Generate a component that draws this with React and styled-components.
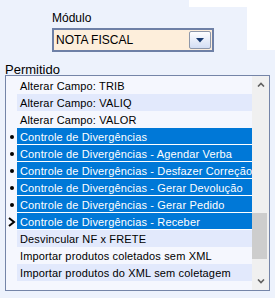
import React from "react";
import styled, { createGlobalStyle } from "styled-components";

const GlobalStyle = createGlobalStyle`
  body {
    margin: 0;
    background: #ffffff;
    font-family: "Liberation Sans", Arial, sans-serif;
  }
`;

const items = [
  { label: "Alterar Campo: TRIB" },
  { label: "Alterar Campo: VALIQ" },
  { label: "Alterar Campo: VALOR" },
  { label: "Controle de Divergências", selected: true, mark: "dot" },
  { label: "Controle de Divergências - Agendar Verba", selected: true, mark: "dot" },
  { label: "Controle de Divergências - Desfazer Correção", selected: true, mark: "dot" },
  { label: "Controle de Divergências - Gerar Devolução", selected: true, mark: "dot" },
  { label: "Controle de Divergências - Gerar Pedido", selected: true, mark: "dot" },
  { label: "Controle de Divergências - Receber", selected: true, mark: "arrow" },
  { label: "Desvincular NF x FRETE" },
  { label: "Importar produtos coletados sem XML" },
  { label: "Importar produtos do XML sem coletagem" },
];

const Page = styled.div`
  width: 275px;
  height: 298px;
  overflow: hidden;
  background: #edf2fc;
`;

//header with the white notch on the right
const Header = styled.div`
  display: grid;
  grid-template-columns: 189px 58px 28px;
  grid-template-rows: 7px 45px;
  background: #edf2fc;
`;

const Fill = styled.div`
  background: ${(p) => (p.$white ? "#ffffff" : "#edf2fc")};
  grid-column: ${(p) => p.$col};
  height: ${(p) => (p.$h ? p.$h + "px" : "auto")};
`;

const ModuleField = styled.div`
  grid-column: 1 / 3;
  padding: 4px 0 0 52px;
`;

const FieldLabel = styled.div`
  font-size: ${(p) => p.$size}px;
  line-height: ${(p) => p.$lh}px;
  color: #000;
`;

const Select = styled.div`
  margin-top: 3px;
  width: 162px;
  height: 24px;
  box-sizing: border-box;
  border: 2px solid #6e80a6;
  background: #fdeedb;
  display: flex;
  align-items: center;
  justify-content: space-between;
  padding: 0 1px 0 2px;
`;

const SelectText = styled.span`
  font-size: 12px;
  color: #000;
`;

const DropButton = styled.div`
  width: 22px;
  height: 18px;
  box-sizing: border-box;
  border: 1px solid #8d97aa;
  border-radius: 2px;
  background: linear-gradient(#fefeff, #d3def4);
  display: flex;
  align-items: center;
  justify-content: center;
`;

const Section = styled.div`
  padding: 12px 0 0 5px;
`;

const ListBox = styled.div`
  width: 265px;
  height: 216px;
  box-sizing: border-box;
  border: 1px solid #7585a8;
  display: flex;
  background: #f5f7fe;
`;

const Rows = styled.div`
  flex: 1;
  padding-top: 1px;
`;

const Row = styled.div`
  display: grid;
  grid-template-columns: 11px 1fr;
  height: 17px;
`;

const Marker = styled.div`
  display: flex;
  align-items: center;
  justify-content: center;
`;

const Dot = styled.span`
  width: 4px;
  height: 4px;
  border-radius: 50%;
  background: #000;
  margin-left: 1px;
`;

const Cell = styled.div`
  box-sizing: border-box;
  padding: 1px 0 0 3px;
  font-size: 11px;
  letter-spacing: 0.15px;
  line-height: 16px;
  white-space: nowrap;
  overflow: hidden;
  color: ${(p) => (p.$selected ? "#ffffff" : "#000000")};
  background: ${(p) =>
    p.$selected ? "#0078d7" : p.$alt ? "#e2e9fc" : "#f5f7fe"};
  border-bottom: ${(p) => (p.$selected ? "1px solid #ffffff" : "none")};
`;

const Scrollbar = styled.div`
  width: 17px;
  background: #f0f0f0;
  display: flex;
  flex-direction: column;
`;

const ArrowBox = styled.div`
  height: 17px;
  display: flex;
  align-items: center;
  justify-content: center;
`;

const Track = styled.div`
  flex: 1;
  padding-top: ${(p) => p.$top}px;
`;

const Thumb = styled.div`
  width: 15px;
  height: ${(p) => p.$h}px;
  background: #cdcdcd;
`;

const Chevron = ({ up }) => (
  <svg width="8" height="5" viewBox="0 0 8 5">
    <polyline
      points={up ? "1,4.5 4,1.5 7,4.5" : "1,0.5 4,3.5 7,0.5"}
      fill="none"
      stroke="#606060"
      strokeWidth="1.6"
    />
  </svg>
);

const RowMark = ({ mark }) => {
  if (mark === "dot") return <Dot />;
  if (mark === "arrow")
    return (
      <svg width="8" height="10" viewBox="0 0 8 10" style={{ marginTop: 1 }}>
        <polyline
          points="1,1 6,5 1,9"
          fill="none"
          stroke="#000"
          strokeWidth="2"
          strokeLinejoin="miter"
        />
      </svg>
    );
  return null;
};

export default function App() {
  return (
    <>
      <GlobalStyle />
      <Page>
        <Header>
          <Fill $col="1" />
          <Fill $col="2 / 4" $white />
          <ModuleField>
            <FieldLabel $size={12} $lh={14}>
              Módulo
            </FieldLabel>
            <Select>
              <SelectText>NOTA FISCAL</SelectText>
              <DropButton>
                <svg width="8" height="5" viewBox="0 0 8 5">
                  <polygon points="0,0 8,0 4,4.5" fill="#183a70" />
                </svg>
              </DropButton>
            </Select>
          </ModuleField>
          <Fill $col="3" $white $h={43} />
        </Header>

        <Section>
          <FieldLabel $size={13} $lh={11}>
            Permitido
          </FieldLabel>
          <ListBox>
            <Rows>
              {items.map((item, i) => (
                <Row key={i}>
                  <Marker>
                    <RowMark mark={item.mark} />
                  </Marker>
                  <Cell $selected={item.selected} $alt={i % 2 === 1}>
                    {item.label}
                  </Cell>
                </Row>
              ))}
            </Rows>
            <Scrollbar>
              <ArrowBox>
                <Chevron up />
              </ArrowBox>
              <Track $top={120}>
                <Thumb $h={46} />
              </Track>
              <ArrowBox>
                <Chevron />
              </ArrowBox>
            </Scrollbar>
          </ListBox>
        </Section>
      </Page>
    </>
  );
}
